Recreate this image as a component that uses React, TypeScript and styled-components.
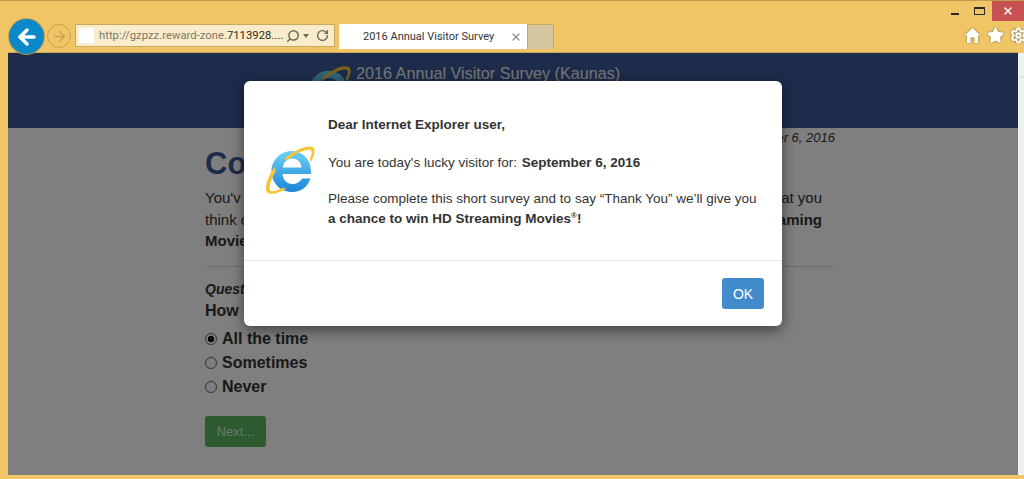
import { Star, Settings, Search, RotateCw, ArrowLeft, ArrowRight, ChevronUp, X } from "lucide-react";
import styled, { createGlobalStyle } from "styled-components";

const GlobalStyle = createGlobalStyle`
  html, body {
    margin: 0;
    padding: 0;
    background: #f0c566;
    font-family: "Liberation Sans", Arial, sans-serif;
  }
`;

const Frame = styled.div`
  width: 1024px;
  height: 479px;
  box-sizing: border-box;
  display: flex;
  flex-direction: column;
  overflow: hidden;
  background: #f0c566;
  border-top: 1px solid #bb9c50;
`;

const TitleBar = styled.div`
  height: 20px;
  display: flex;
  justify-content: flex-end;
  align-items: stretch;
  flex: none;
`;

const WindowButton = styled.div<{ $close?: boolean }>`
  width: ${(p) => (p.$close ? "32px" : "25px")};
  display: flex;
  align-items: center;
  justify-content: center;
  background: ${(p) => (p.$close ? "#c75050" : "transparent")};
  color: ${(p) => (p.$close ? "#fff" : "#2a2a2a")};
`;

const MaxBox = styled.span`
  width: 7px;
  height: 4px;
  border: 1px solid #2a2a2a;
  border-top-width: 2px;
  padding: 0 1px 1px;
`;

const MinBar = styled.span`
  width: 8px;
  height: 2px;
  margin-top: 5px;
  background: #2a2a2a;
`;

const Toolbar = styled.div`
  height: 31px;
  flex: none;
  display: flex;
  align-items: flex-start;
  padding-left: 9px;
`;

const BackButton = styled.div`
  width: 35px;
  height: 35px;
  margin-top: -2px;
  border-radius: 50%;
  background: #0a88c8;
  box-shadow: 0 0 0 1px #c9a04e;
  color: #fff;
  display: flex;
  align-items: center;
  justify-content: center;
  flex: none;
  z-index: 1;
`;

const ForwardButton = styled.div`
  width: 24px;
  height: 24px;
  box-sizing: border-box;
  margin: 3px 0 0 3px;
  border-radius: 50%;
  border: 1px solid #c9a04e;
  color: #c9a551;
  display: flex;
  align-items: center;
  justify-content: center;
  flex: none;
`;

const AddressBar = styled.div`
  width: 260px;
  height: 23px;
  box-sizing: border-box;
  margin: 3px 0 0 4px;
  background: #f9ecca;
  border: 1px solid #c9a85c;
  display: flex;
  align-items: center;
  padding-left: 3px;
  flex: none;
`;

const Favicon = styled.span`
  width: 15px;
  height: 15px;
  background: #fff;
  flex: none;
`;

const Url = styled.span`
  margin-left: 5px;
  width: 187px;
  font-family: Roboto, sans-serif;
  font-size: 11.3px;
  color: #7c7668;
  white-space: nowrap;
  flex: none;
`;

const UrlStrong = styled.span`
  color: #2e2a22;
`;

const AddressTools = styled.span`
  display: flex;
  align-items: center;
  color: #6f675a;
  flex: none;
`;

const Caret = styled.span`
  width: 0;
  height: 0;
  margin: 1px 7px 0 3px;
  border-left: 3px solid transparent;
  border-right: 3px solid transparent;
  border-top: 4px solid #6f675a;
`;

const Tab = styled.div`
  width: 188px;
  height: 25px;
  box-sizing: border-box;
  margin: 3px 0 0 4px;
  background: #fff;
  display: flex;
  align-items: center;
  padding: 0 5px 0 24px;
  justify-content: space-between;
  font-family: Roboto, sans-serif;
  font-size: 11px;
  color: #333;
  flex: none;
`;

const NewTab = styled.div`
  width: 27px;
  height: 25px;
  box-sizing: border-box;
  margin-top: 3px;
  background: #d5c69f;
  border: 1px solid #c9a85c;
  border-bottom: none;
  flex: none;
`;

const ToolIcons = styled.div`
  margin-left: auto;
  margin-top: 6px;
  display: flex;
  gap: 6px;
  width: 60px;
  color: #fff;
  flex: none;
  overflow: hidden;
`;

const ToolIcon = styled.span`
  display: flex;
  flex: none;
  filter: drop-shadow(0 0 1px #7d6a3a);
`;

const Viewport = styled.div`
  flex: 1;
  margin: 0 6px 4px 8px;
  position: relative;
  background: #fff;
  border-top: 1px solid #c9a85c;
`;

const Scrollbar = styled.div`
  position: absolute;
  right: -6px;
  top: 0;
  bottom: 0;
  width: 6px;
  padding-top: 14px;
  background: #f0f0f0;
  color: #c4c4c4;
  overflow: hidden;
`;

const SiteHeader = styled.header`
  height: 75px;
  background: #3b5896;
  display: flex;
  padding-left: 295px;
  gap: 5px;
`;

const HeaderLogo = styled.div`
  width: 48px;
  padding-top: 12px;
`;

const SiteTitle = styled.div`
  padding-top: 11px;
  font-size: 16.2px;
  color: #eeeeee;
`;

const Container = styled.main`
  width: 630px;
  margin-left: 197px;
  color: #333;
`;

const DateLine = styled.div`
  text-align: right;
  font-size: 13px;
  font-style: italic;
  line-height: 18px;
  padding-top: 1px;
`;

const Heading = styled.h1`
  margin: 0 0 6px;
  font-size: 31px;
  line-height: 34px;
  font-weight: 700;
  color: #3b5896;
`;

const Intro = styled.div`
  padding-right: 13px;
  font-size: 15px;
  line-height: 21.5px;
`;

const IntroLine = styled.div`
  display: flex;
  justify-content: space-between;
  white-space: nowrap;
`;

const Strong = styled.span`
  font-weight: 700;
`;

const Rule = styled.hr`
  margin: 14px 0 14px;
  border: none;
  border-top: 1px solid #ddd;
`;

const QuestionLabel = styled.div`
  font-size: 14px;
  font-weight: 700;
  font-style: italic;
  line-height: 17px;
`;

const QuestionText = styled.div`
  font-size: 16px;
  font-weight: 700;
  line-height: 24px;
  margin: 1px 0 4px;
`;

const Option = styled.div`
  height: 24px;
  display: flex;
  align-items: center;
  gap: 5px;
  font-size: 16px;
  font-weight: 700;
`;

const Radio = styled.span<{ $checked?: boolean }>`
  width: 10px;
  height: 10px;
  border: 1px solid #666;
  border-radius: 50%;
  background: ${(p) =>
    p.$checked ? "radial-gradient(circle, #000 0 3px, #fff 3.6px)" : "#fff"};
  flex: none;
`;

const NextButton = styled.div`
  width: 61px;
  height: 31px;
  margin-top: 17px;
  border-radius: 3px;
  background: #5cb561;
  color: rgba(255, 255, 255, 0.75);
  font-size: 13px;
  display: flex;
  align-items: center;
  justify-content: center;
`;

const Backdrop = styled.div`
  position: absolute;
  inset: 0;
  background: rgba(0, 0, 0, 0.5);
  padding: 28px 0 0 236px;
`;

const Modal = styled.div`
  width: 538px;
  height: 245px;
  box-sizing: border-box;
  background: #fff;
  border-radius: 6px;
  box-shadow: 0 4px 14px rgba(0, 0, 0, 0.5);
  color: #333;
`;

const ModalBody = styled.div`
  height: 180px;
  box-sizing: border-box;
  border-bottom: 1px solid #e5e5e5;
  display: flex;
  align-items: center;
  padding: 0 20px 0 21px;
`;

const ModalLogo = styled.div`
  width: 63px;
  flex: none;
  padding-top: 3px;
`;

const ModalText = styled.div`
  align-self: flex-start;
  font-size: 13.5px;
  line-height: 20px;
  padding-top: 34px;
  white-space: nowrap;
`;

const Para = styled.p<{ $gap?: number }>`
  margin: 0 0 ${(p) => p.$gap ?? 0}px;
`;

const VisitDate = styled.b`
  margin-left: 1px;
`;

const Reg = styled.sup`
  font-size: 8px;
  line-height: 0;
`;

const ModalFooter = styled.div`
  display: flex;
  justify-content: flex-end;
  padding: 17px 18px;
`;

const OkButton = styled.div`
  width: 42px;
  height: 31px;
  border-radius: 3px;
  background: #428bca;
  color: #fff;
  font-size: 14px;
  display: flex;
  align-items: center;
  justify-content: center;
`;

function IeLogo({ size }: { size: number }) {
  const id = `ie-${size}`;
  return (
    <svg width={size} height={size} viewBox="0 0 50 50">
      <defs>
        <linearGradient id={id} x1="0" y1="0" x2="0" y2="1">
          <stop offset="0" stopColor="#6fd0f5" />
          <stop offset="1" stopColor="#1a86d8" />
        </linearGradient>
      </defs>
      <path
        fill={`url(#${id})`}
        fillRule="evenodd"
        d="M27 6C37 6 46 14 46 26.5V29H17.5C18 35 22 39 27.5 39C32 39 35 37 37 33.5H45.5C42.5 42 36 47 27 47C15.5 47 6.5 38 6.5 26.5S15.5 6 27 6ZM17.8 22.5H36.5C36 17 32.5 13.5 27.3 13.5C22.2 13.5 18.5 17 17.8 22.5Z"
      />
      <path
        fill="#f6c436"
        d="M48.5 2.5C43 -1 31 4 19 14L22 15C33 7 41 3.5 45.5 5C47.5 6.5 47 10 44.5 14L46 17C49.5 10 50.5 5 48.5 2.5ZM9.5 22C3 31 -0.5 42 1.5 46.5C4 50.5 12 49 21 44L18.5 42.5C12 46 7 47 5 45.5C3.5 42 6.5 33 11 26Z"
      />
    </svg>
  );
}

function HomeGlyph() {
  return (
    <svg width="17" height="17" viewBox="0 0 17 17" fill="#fff">
      <path
        fillRule="evenodd"
        d="M8.5 1L16.5 8.5H14V16H10.5V10.5H6.5V16H3V8.5H0.5Z"
      />
    </svg>
  );
}

export default function App() {
  return (
    <Frame>
      <GlobalStyle />
      <TitleBar>
        <WindowButton>
          <MinBar />
        </WindowButton>
        <WindowButton>
          <MaxBox />
        </WindowButton>
        <WindowButton $close>
          <X size={12} strokeWidth={3} />
        </WindowButton>
      </TitleBar>
      <Toolbar>
        <BackButton>
          <ArrowLeft size={24} strokeWidth={3.5} />
        </BackButton>
        <ForwardButton>
          <ArrowRight size={17} strokeWidth={2} />
        </ForwardButton>
        <AddressBar>
          <Favicon />
          <Url>
            http://gzpzz.reward-zone.<UrlStrong>7113928....</UrlStrong>
          </Url>
          <AddressTools>
            <Search size={14} strokeWidth={2.5} style={{ transform: "scaleX(-1)" }} />
            <Caret />
            <RotateCw size={13} strokeWidth={2.5} />
          </AddressTools>
        </AddressBar>
        <Tab>
          2016 Annual Visitor Survey
          <X size={12} strokeWidth={2.5} color="#8d8d8d" />
        </Tab>
        <NewTab />
        <ToolIcons>
          <ToolIcon>
            <HomeGlyph />
          </ToolIcon>
          <ToolIcon>
            <Star size={17} fill="#fff" />
          </ToolIcon>
          <ToolIcon>
            <Settings size={17} strokeWidth={3} />
          </ToolIcon>
        </ToolIcons>
      </Toolbar>
      <Viewport>
        <SiteHeader>
          <HeaderLogo>
            <IeLogo size={48} />
          </HeaderLogo>
          <SiteTitle>2016 Annual Visitor Survey (Kaunas)</SiteTitle>
        </SiteHeader>
        <Container>
          <DateLine>September 6, 2016</DateLine>
          <Heading>Co</Heading>
          <Intro>
            <IntroLine>
              <span>You'v</span>
              <span>at you</span>
            </IntroLine>
            <IntroLine>
              <span>think o</span>
              <Strong>aming</Strong>
            </IntroLine>
            <IntroLine>
              <Strong>Movie</Strong>
            </IntroLine>
          </Intro>
          <Rule />
          <QuestionLabel>Quest</QuestionLabel>
          <QuestionText>How</QuestionText>
          <Option>
            <Radio $checked />
            All the time
          </Option>
          <Option>
            <Radio />
            Sometimes
          </Option>
          <Option>
            <Radio />
            Never
          </Option>
          <NextButton>Next...</NextButton>
        </Container>
        <Backdrop>
          <Modal>
            <ModalBody>
              <ModalLogo>
                <IeLogo size={50} />
              </ModalLogo>
              <ModalText>
                <Para $gap={18}>
                  <b>Dear Internet Explorer user,</b>
                </Para>
                <Para $gap={16}>
                  You are today's lucky visitor for: <VisitDate>September 6, 2016</VisitDate>
                </Para>
                <Para>
                  Please complete this short survey and to say “Thank You” we’ll give you
                  <br />
                  <b>
                    a chance to win HD Streaming Movies<Reg>®</Reg>!
                  </b>
                </Para>
              </ModalText>
            </ModalBody>
            <ModalFooter>
              <OkButton>OK</OkButton>
            </ModalFooter>
          </Modal>
        </Backdrop>
        <Scrollbar>
          <ChevronUp size={8} strokeWidth={2} />
        </Scrollbar>
      </Viewport>
    </Frame>
  );
}
